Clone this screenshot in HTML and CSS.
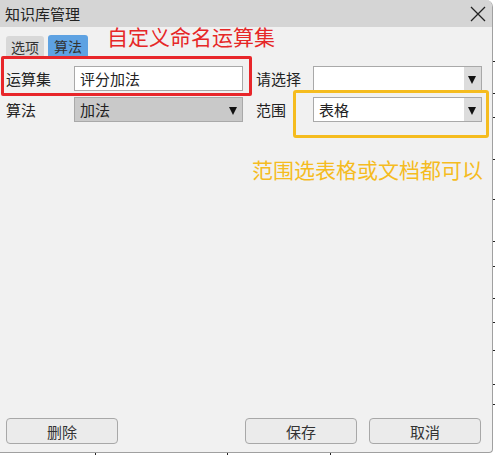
FILE: index.html
```html
<!DOCTYPE html>
<html>
<head>
<meta charset="utf-8">
<link rel="stylesheet" href="styles.css">
</head>
<body>
<div class="bg">
  <div class="tick" style="top:61px"></div>
  <div class="tick" style="top:93px"></div>
  <div class="tick" style="top:117px"></div>
  <div class="tick" style="top:159px"></div>
  <div class="tick" style="top:199px"></div>
  <div class="tick" style="top:241px"></div>
  <div class="tick" style="top:266px"></div>
  <div class="tick" style="top:298px"></div>
  <div class="tick" style="top:322px"></div>
  <div class="tick" style="top:350px"></div>
  <div class="tick" style="top:384px"></div>
  <div class="tick" style="top:404px"></div>
  <div class="vsep" style="left:95px"></div>
  <div class="vsep" style="left:227px"></div>
  <div class="vsep" style="left:330px"></div>
</div>
<div class="dialog">
  <div class="titlebar">
    <span class="title">知识库管理</span>
    <svg class="close" width="16" height="16" viewBox="0 0 16 16"><path d="M1 1L15 15M15 1L1 15" stroke="#222" stroke-width="1.3" fill="none"/></svg>
  </div>
  <div class="tabs">
    <div class="tab">选项</div>
    <div class="tab active">算法</div>
  </div>
  <div class="form">
    <div class="label">运算集</div>
    <div class="input">评分加法</div>
    <div class="label right">请选择</div>
    <div class="select"><span></span><i class="arrow"></i></div>
    <div class="label">算法</div>
    <div class="select disabled"><span>加法</span><i class="arrow"></i></div>
    <div class="label right">范围</div>
    <div class="select"><span>表格</span><i class="arrow"></i></div>
  </div>
  <div class="footer">
    <button class="btn">删除</button>
    <div class="spacer"></div>
    <button class="btn">保存</button>
    <button class="btn">取消</button>
  </div>
  <div class="note red-text">自定义命名运算集</div>
  <div class="note yellow-text">范围选表格或文档都可以</div>
  <div class="red-box"></div>
  <div class="yellow-box"></div>
</div>
</body>
</html>
```
FILE: styles.css
```css
* { box-sizing: border-box; }
html, body { margin: 0; padding: 0; }
body {
  width: 495px;
  height: 455px;
  overflow: hidden;
  background: #ffffff;
  position: relative;
  font-family: "Noto Sans CJK SC", "Noto Sans", sans-serif;
  color: #222;
}
.bg { position: absolute; inset: 0; }
.tick { position: absolute; left: 492px; width: 3px; height: 1px; background: #222; }
.vsep { position: absolute; top: 452px; width: 1px; height: 3px; background: #222; }
.dialog {
  position: absolute;
  left: 0; top: 0;
  width: 493px;
  height: 453px;
  background: #f1f1f1;
  border-right: 1px solid #a0a0a0;
  border-bottom: 1px solid #a0a0a0;
  border-top-right-radius: 7px;
  border-bottom-right-radius: 4px;
  display: flex;
  flex-direction: column;
  overflow: hidden;
}
.titlebar {
  height: 27px;
  background: #d5d5d5;
  display: flex;
  align-items: center;
  justify-content: space-between;
  padding: 0 5px 0 5px;
  flex: none;
}
.title { font-size: 15px; line-height: 1; color: #222; }
.close { margin-right: 1px; }
.tabs {
  display: flex;
  gap: 4px;
  padding: 9px 0 0 6px;
  height: 31px;
  align-items: flex-end;
}
.tab {
  height: 22px;
  width: 38px;
  font-size: 14px;
  line-height: 22px;
  text-align: center;
  background: #d8d8d8;
  border-radius: 3px 3px 0 0;
  color: #333;
}
.tab.active { background: #5ea2e2; width: 40px; height: 23px; }
.form {
  display: grid;
  grid-template-columns: 68px 169px 70px 169px;
  row-gap: 6px;
  padding: 8px 0 0 6px;
  align-items: center;
}
.form .label { font-size: 15px; color: #222; }
.form .label.right { padding-left: 13px; }
.input {
  height: 25px;
  background: #fff;
  border: 1px solid #a9a9a9;
  font-size: 15px;
  line-height: 23px;
  padding-left: 5px;
}
.select {
  height: 25px;
  background: #fff;
  border: 1px solid #a9a9a9;
  display: flex;
  font-size: 15px;
  line-height: 23px;
}
.select span { flex: 1; padding-left: 5px; }
.select.disabled { background: #c9c9c9; }
.arrow {
  width: 17px;
  background: #dcdcdc;
  position: relative;
}
.select.disabled .arrow { background: #c9c9c9; }
.arrow::after {
  content: "";
  position: absolute;
  left: 4px;
  top: 9px;
  border-left: 4.5px solid transparent;
  border-right: 4.5px solid transparent;
  border-top: 8px solid #111;
}
.footer {
  margin-top: auto;
  display: flex;
  gap: 12px;
  padding: 0 11px 8px 6px;
}
.spacer { flex: 1; }
.btn {
  width: 112px;
  height: 26px;
  background: #ebebeb;
  border: 1px solid #a8a8a8;
  border-radius: 4px;
  font-family: inherit;
  font-size: 15px;
  color: #333;
  padding: 0;
}
.note { position: absolute; line-height: 1; white-space: nowrap; }
.red-text { left: 107px; top: 26px; font-size: 21px; color: #e62727; }
.yellow-text { left: 252px; top: 159px; font-size: 21px; color: #f5bc1f; }
.red-box {
  position: absolute;
  left: 1px; top: 56px;
  width: 251px; height: 40px;
  border: 3px solid #e8262a;
  border-radius: 2px;
}
.yellow-box {
  position: absolute;
  left: 293px; top: 90px;
  width: 196px; height: 48px;
  border: 3px solid #f5bc1f;
  border-radius: 3px;
}
```
